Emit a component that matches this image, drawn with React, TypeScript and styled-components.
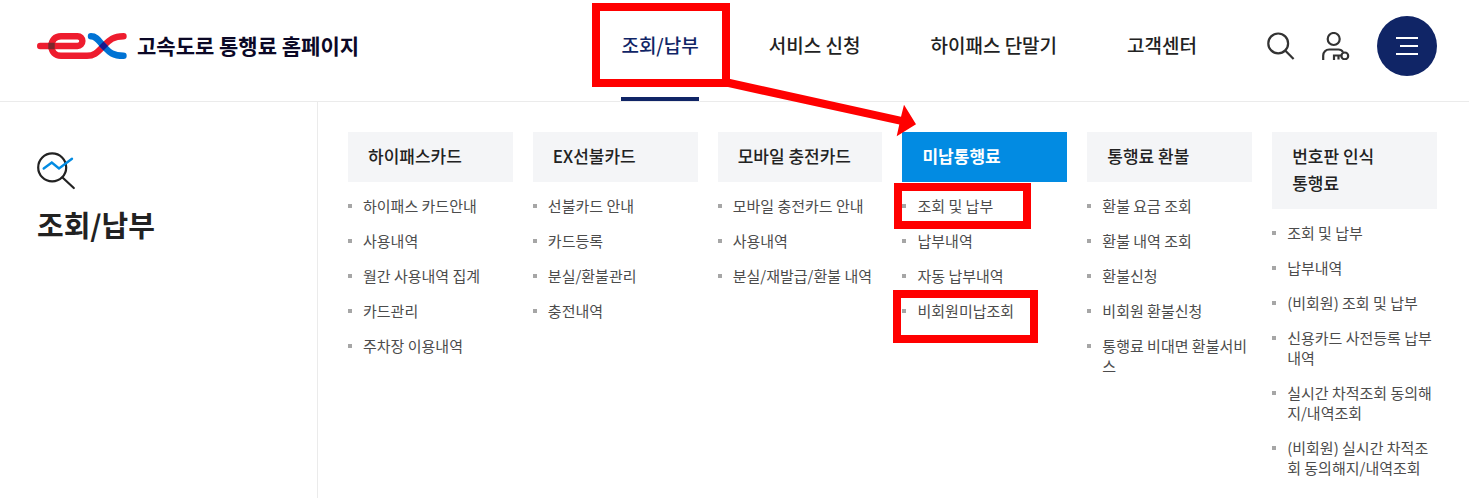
import React from 'react';
import styled, { createGlobalStyle } from 'styled-components';

const GlobalStyle = createGlobalStyle`
  *, *::before, *::after { box-sizing: border-box; }
  body {
    margin: 0;
    background: #fff;
    color: #222;
    font-family: 'Noto Sans CJK KR', 'Noto Sans', sans-serif;
  }
  a { color: inherit; text-decoration: none; }
  ul, h1, h2 { margin: 0; padding: 0; }
  ul { list-style: none; }
`;

const Page = styled.div`
  display: flex;
  flex-direction: column;
  min-height: 100vh;
`;

const Header = styled.header`
  display: flex;
  align-items: stretch;
  height: 102px;
  padding: 0 32px 0 37px;
  border-bottom: 1px solid #ebebeb;
`;

const Logo = styled.a`
  display: flex;
  align-items: center;
  gap: 10px;
  margin-right: auto;
  padding-bottom: 9px;
  color: #0b0826;
`;

const LogoText = styled.span`
  padding-bottom: 2px;
  font-size: 21px;
  font-weight: 700;
  line-height: 30px;
  white-space: nowrap;
`;

const Nav = styled.nav`
  display: flex;
  gap: 70px;
  margin-right: 70px;
`;

const NavItem = styled.div`
  position: relative;
  display: flex;
`;

const NavLink = styled.a<{ $active?: boolean }>`
  display: flex;
  align-items: center;
  padding: 4px 0 12px;
  border-bottom: 4px solid ${(p) => (p.$active ? '#102566' : 'transparent')};
  color: ${(p) => (p.$active ? '#102566' : '#222')};
  font-size: 19px;
  font-weight: 500;
  line-height: 28px;
  white-space: nowrap;
`;

const Tools = styled.div`
  display: flex;
  align-items: center;
  gap: 27px;
  padding-bottom: 9px;
`;

const IconButton = styled.button`
  display: flex;
  padding: 0;
  border: 0;
  background: none;
  cursor: pointer;
`;

const MenuButton = styled(IconButton)`
  align-items: center;
  justify-content: center;
  width: 60px;
  height: 60px;
  border-radius: 50%;
  background: #102566;
`;

const Panel = styled.main`
  display: flex;
  flex: 1;
`;

const Side = styled.aside`
  flex: 0 0 318px;
  padding: 50px 0 0 37px;
  border-right: 1px solid #ebebeb;

  svg { display: block; }
`;

const SideTitle = styled.h1`
  margin-top: 10px;
  font-size: 29px;
  font-weight: 700;
  line-height: 44px;
`;

const Columns = styled.div`
  display: grid;
  flex: 1;
  grid-template-columns: repeat(6, minmax(0, 1fr));
  gap: 20px;
  padding: 30px 32px 16px 30px;
`;

const ColumnTitle = styled.h2<{ $active?: boolean }>`
  padding: 10px 20px 13px;
  background: ${(p) => (p.$active ? '#028be2' : '#f4f5f7')};
  color: ${(p) => (p.$active ? '#fff' : '#222')};
  font-size: 17px;
  font-weight: ${(p) => (p.$active ? 700 : 500)};
  line-height: 27px;
  word-break: keep-all;
`;

const Links = styled.ul`
  display: flex;
  flex-direction: column;
  gap: 15px;
  padding-top: 14px;
`;

const LinkItem = styled.li`
  position: relative;
  display: flex;
  gap: 11px;
  color: #4c4c4c;
  font-size: 15px;
  line-height: 20px;

  &::before {
    content: '';
    flex: none;
    width: 4px;
    height: 4px;
    margin-top: 8px;
    background: #a6a6a6;
  }
`;

const Mark = styled.span<{ $top: number; $left: number; $width: number; $height: number }>`
  position: absolute;
  z-index: 1;
  top: ${(p) => p.$top}px;
  left: ${(p) => p.$left}px;
  width: ${(p) => p.$width}px;
  height: ${(p) => p.$height}px;
  border: 8px solid #f00;
  pointer-events: none;
`;

const Arrow = styled.svg`
  position: absolute;
  z-index: 2;
  top: 76px;
  left: 103px;
  pointer-events: none;
`;

type MarkBox = [top: number, left: number, width: number, height: number];
type MenuLink = { text: string; mark?: MarkBox };
type MenuColumn = { title: string; active?: boolean; links: MenuLink[] };

const navItems = ['조회/납부', '서비스 신청', '하이패스 단말기', '고객센터'];

const toLinks = (...texts: string[]): MenuLink[] => texts.map((text) => ({ text }));

const columns: MenuColumn[] = [
  {
    title: '하이패스카드',
    links: toLinks('하이패스 카드안내', '사용내역', '월간 사용내역 집계', '카드관리', '주차장 이용내역'),
  },
  {
    title: 'EX선불카드',
    links: toLinks('선불카드 안내', '카드등록', '분실/환불관리', '충전내역'),
  },
  {
    title: '모바일 충전카드',
    links: toLinks('모바일 충전카드 안내', '사용내역', '분실/재발급/환불 내역'),
  },
  {
    title: '미납통행료',
    active: true,
    links: [
      { text: '조회 및 납부', mark: [-13, -8, 137, 46] },
      { text: '납부내역' },
      { text: '자동 납부내역' },
      { text: '비회원미납조회', mark: [-11, -9, 145, 53] },
    ],
  },
  {
    title: '통행료 환불',
    links: toLinks('환불 요금 조회', '환불 내역 조회', '환불신청', '비회원 환불신청', '통행료 비대면 환불서비스'),
  },
  {
    title: '번호판 인식 통행료',
    links: toLinks(
      '조회 및 납부',
      '납부내역',
      '(비회원) 조회 및 납부',
      '신용카드 사전등록 납부내역',
      '실시간 차적조회 동의해지/내역조회',
      '(비회원) 실시간 차적조회 동의해지/내역조회',
    ),
  },
];

const ExLogo = () => (
  <svg width="90" height="26" viewBox="0 0 90 26" fill="none" strokeWidth="6.4" strokeLinecap="round" aria-hidden="true">
    <path
      stroke="#ee1c2e"
      d="M3.200 13H40.500a4.900 4.900 0 0 0 0-9.800H24C18 3.200 14.500 7 14.500 13S18 22.800 24 22.800H50C58 22.800 60.500 19 66.500 13S76 3.200 86.500 3.200"
    />
    <path stroke="#0073d4" d="M54 3.200C60 3.200 62 8.500 66.500 13S74 22.800 86.500 22.800" />
    <path fill="#19198c" d="M66.500 8.500L71 13L66.500 17.500L62 13Z" />
    <path fill="#7b272c" d="M11.300 9.800h6.400v6.400h-6.400z" />
  </svg>
);

const SearchIcon = () => (
  <svg width="28" height="28" viewBox="0 0 28 28" fill="none" stroke="#333" strokeWidth="2.2" aria-hidden="true">
    <circle cx="11.200" cy="11.400" r="9.900" />
    <path d="M18.200 18.400L26.600 27" />
  </svg>
);

const UserKeyIcon = () => (
  <svg width="28" height="28" viewBox="0 0 28 28" fill="none" stroke="#333" strokeWidth="2.2" aria-hidden="true">
    <circle cx="11.700" cy="7" r="6" />
    <path d="M1.200 28V23.500A6 6 0 0 1 7.200 17.500H16.500Q19.500 17.500 21 20" />
    <circle cx="22.800" cy="23.900" r="3.400" />
    <path d="M19.500 23.500H12V28M16.500 23.500V27.500" />
  </svg>
);

const ChartSearchIcon = () => (
  <svg width="40" height="40" viewBox="0 0 40 40" fill="none" strokeWidth="2.2" strokeLinecap="round" aria-hidden="true">
    <circle cx="15.200" cy="15.400" r="14" stroke="#222" />
    <path stroke="#222" d="M25.500 25.500L36.800 36" />
    <path stroke="#028be2" strokeWidth="2.400" d="M6.700 16.500L14.800 10.500L22 16.500L35 6.800" />
  </svg>
);

export default function App() {
  return (
    <>
      <GlobalStyle />
      <Page>
        <Header>
          <Logo href="#">
            <ExLogo />
            <LogoText>고속도로 통행료 홈페이지</LogoText>
          </Logo>
          <Nav>
            {navItems.map((item, index) => (
              <NavItem key={item}>
                <NavLink href="#" $active={index === 0}>
                  {item}
                </NavLink>
                {index === 0 && (
                  <>
                    <Mark $top={3} $left={-29} $width={138} $height={84} />
                    <Arrow width="192" height="64" viewBox="0 0 192 64" aria-hidden="true">
                      <path fill="#f00" d="M4 2.500L177 40.700L180 28.700L192 48.300L172.700 60.300L175.300 48.500L4 11Z" />
                    </Arrow>
                  </>
                )}
              </NavItem>
            ))}
          </Nav>
          <Tools>
            <IconButton type="button" aria-label="검색">
              <SearchIcon />
            </IconButton>
            <IconButton type="button" aria-label="로그인">
              <UserKeyIcon />
            </IconButton>
            <MenuButton type="button" aria-label="전체 메뉴">
              <svg width="22" height="18" viewBox="0 0 22 18" stroke="#fff" strokeWidth="2" aria-hidden="true">
                <path d="M0 1H22M4 9H22M0 17H22" />
              </svg>
            </MenuButton>
          </Tools>
        </Header>
        <Panel>
          <Side>
            <ChartSearchIcon />
            <SideTitle>조회/납부</SideTitle>
          </Side>
          <Columns>
            {columns.map((column) => (
              <section key={column.title}>
                <ColumnTitle $active={column.active}>{column.title}</ColumnTitle>
                <Links>
                  {column.links.map(({ text, mark }) => (
                    <LinkItem key={text}>
                      <a href="#">{text}</a>
                      {mark && <Mark $top={mark[0]} $left={mark[1]} $width={mark[2]} $height={mark[3]} />}
                    </LinkItem>
                  ))}
                </Links>
              </section>
            ))}
          </Columns>
        </Panel>
      </Page>
    </>
  );
}
